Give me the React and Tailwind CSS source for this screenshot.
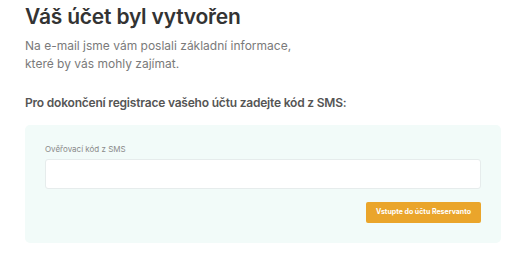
export default function App() {
  return (
    <div
      className="w-[520px] h-[258px] bg-white overflow-hidden pl-[25px] pr-[19px]"
      style={{ fontFamily: "Inter, 'Noto Sans', sans-serif" }}
    >
      <h1 className="pt-[2px] text-[21px] leading-[30px] font-semibold text-[#333333] tracking-[-0.2px]">
        Váš účet byl vytvořen
      </h1>
      <p className="mt-[5px] text-[12px] leading-[18px] text-[#7a7a7a]">
        Na e-mail jsme vám poslali základní informace,
        <br />
        které by vás mohly zajímat.
      </p>
      <h2 className="mt-[21px] text-[12px] leading-[18px] font-semibold text-[#555555] tracking-[-0.2px]">
        Pro dokončení registrace vašeho účtu zadejte kód z SMS:
      </h2>
      <div className="mt-[13px] h-[118px] rounded-[5px] bg-[#f2fbf9] px-[20px] pt-[19px]">
        <label className="block text-[8px] leading-[10px] text-[#8a8a8a]">Ověřovací kód z SMS</label>
        <input
          type="text"
          className="mt-[5px] block w-full h-[30px] rounded-[3px] border border-[#e6ecec] bg-white outline-none"
        />
        <div className="mt-[13px] flex justify-end">
          <button className="h-[21px] w-[115px] rounded-[2px] bg-[#eaa52b] text-[7px] font-bold text-white">
            Vstupte do účtu Reservanto
          </button>
        </div>
      </div>
    </div>
  );
}
